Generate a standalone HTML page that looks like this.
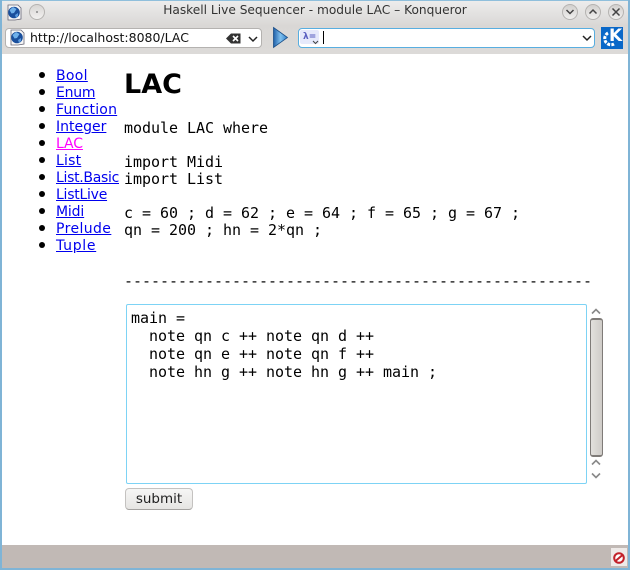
<!DOCTYPE html>
<html><head><meta charset="utf-8"><style>
html,body{margin:0;padding:0;background:#fff}
#w{position:relative;width:630px;height:570px;overflow:hidden;background:#fff;font-family:"DejaVu Sans","Liberation Sans",sans-serif}
.a{position:absolute;white-space:pre}
.m{font-family:"DejaVu Sans Mono","Liberation Mono",monospace;font-size:15px;line-height:17px;color:#000;letter-spacing:-.03px}
.l{left:56px;font-size:14px;line-height:17px;color:#00e;text-decoration:underline;letter-spacing:.1px}
.b{width:6px;height:6px;border-radius:50%;background:#000;left:39px}
svg{position:absolute;overflow:visible}
</style></head><body><div id="w">
<div class="a" style="left:0;top:0;width:630px;height:54px;background:linear-gradient(#ededed,#d9d7d5 26px,#dcdad8)"></div>
<div class="a" style="left:0;top:0;width:630px;height:1px;background:#8fbfdc"></div>
<div class="a" style="left:0;top:0;width:2px;height:570px;background:#7fb4d6"></div>
<div class="a" style="left:628px;top:0;width:2px;height:570px;background:#7fb4d6"></div>
<div class="a" style="left:0;top:568px;width:630px;height:2px;background:#7fb4d6"></div>
<div class="a" style="left:2px;top:54px;width:626px;height:491px;background:#fff"></div>
<div class="a" style="left:2px;top:545px;width:626px;height:23px;background:#c1b9b5"></div>

<div class="a" style="left:0;width:630px;top:1px;text-align:center;font-size:12.2px;line-height:18px;color:#333">Haskell Live Sequencer - module LAC – Konqueror</div>

<svg style="left:7px;top:4px" width="15" height="17" viewBox="0 0 15 17"><path d="M1 1H11L14 4V15L8 16H1Z" fill="#f6f6f6" stroke="#667" stroke-width=".8"/><circle cx="7" cy="8.500" r="5.800" fill="#1a4f9c"/><path d="M2.500 6 6 3 9.500 5 7 9 4.500 9.500Z" fill="#6fb0ea"/><path d="M8 11 11 9 11 12 9 14Z" fill="#5a9be0"/></svg>
<div class="a" style="left:29px;top:4px;width:14px;height:14px;border-radius:50%;background:linear-gradient(#d8d6d4,#f2f1f0);border:1px solid #b5b3b1"></div>
<div class="a" style="left:36px;top:11px;width:2px;height:2px;border-radius:50%;background:#888"></div>

<div class="a" style="left:5px;top:28px;width:255px;height:18px;background:#fff;border:1px solid #b4b2b0;border-radius:4px"></div>
<svg style="left:10px;top:29px" width="15" height="17" viewBox="0 0 15 17"><path d="M1 1H11L14 4V15L8 16H1Z" fill="#f6f6f6" stroke="#667" stroke-width=".8"/><circle cx="7" cy="8.500" r="5.800" fill="#1a4f9c"/><path d="M2.500 6 6 3 9.500 5 7 9 4.500 9.500Z" fill="#6fb0ea"/><path d="M8 11 11 9 11 12 9 14Z" fill="#5a9be0"/></svg>
<div class="a" style="left:30px;top:29px;font-size:12.500px;line-height:18px;color:#111">http://localhost:8080/LAC</div>
<svg style="left:226px;top:33px" width="15" height="11" viewBox="0 0 15 11"><path d="M0 5.500 5 .5H14.500V10.500H5Z" fill="#333"/><path d="M7 3 12 8M12 3 7 8" stroke="#fff" stroke-width="1.600"/></svg>
<svg style="left:248px;top:36px" width="10" height="6" viewBox="0 0 10 6"><path d="M1 1 5 5 9 1" fill="none" stroke="#222" stroke-width="1.500"/></svg>
<svg style="left:273px;top:27px" width="15" height="21" viewBox="0 0 15 21"><defs><linearGradient id="g" x1="0" x2="1" y1="0" y2="0"><stop offset="0" stop-color="#1f5fa8"/><stop offset=".5" stop-color="#7fc0ee"/><stop offset="1" stop-color="#2f7fca"/></linearGradient></defs><path d="M.5 .5 14.500 10.500 .5 20.500Z" fill="url(#g)" stroke="#1c4f88" stroke-width=".8"/></svg>

<div class="a" style="left:298px;top:28px;width:295px;height:18px;background:#fff;border:1px solid #58aee0;border-radius:4px"></div>
<div class="a" style="left:300px;top:30px;width:19px;height:14px;background:#e6e9fb;border-radius:2px"></div>
<div class="a" style="left:303px;top:31px;font-size:9px;line-height:12px;color:#5a5fc0;font-weight:bold">λ=</div>
<svg style="left:312px;top:40px" width="7" height="5" viewBox="0 0 7 5"><path d="M1 1 3.500 3.500 6 1" fill="none" stroke="#444" stroke-width="1"/></svg>
<div class="a" style="left:323px;top:31px;width:1px;height:13px;background:#000"></div>
<svg style="left:582px;top:35px" width="10" height="6" viewBox="0 0 10 6"><path d="M1 1 5 5 9 1" fill="none" stroke="#222" stroke-width="1.500"/></svg>

<div class="a" style="left:601px;top:27px;width:22px;height:22px;background:#0a68c8"></div>
<svg style="left:602px;top:30px" width="14" height="18" viewBox="0 0 14 18"><path d="M6 3A6 6 0 1 0 12 14" fill="none" stroke="#fff" stroke-width="3" stroke-dasharray="3 1.200"/></svg>
<div class="a" style="left:609px;top:26px;font-size:17px;line-height:20px;font-weight:bold;color:#fff">K</div>

<div class="a" style="left:562px;top:4px;width:14px;height:14px;border-radius:50%;background:linear-gradient(#d2d0ce,#f0efee);border:1px solid #b5b3b1"></div>
<div class="a" style="left:585px;top:4px;width:14px;height:14px;border-radius:50%;background:linear-gradient(#d2d0ce,#f0efee);border:1px solid #b5b3b1"></div>
<div class="a" style="left:608px;top:4px;width:14px;height:14px;border-radius:50%;background:linear-gradient(#d2d0ce,#f0efee);border:1px solid #b5b3b1"></div>
<svg style="left:565px;top:8px" width="10" height="8" viewBox="0 0 10 8"><path d="M1.500 2 5 5.500 8.500 2" fill="none" stroke="#444" stroke-width="1.500"/></svg>
<svg style="left:588px;top:8px" width="10" height="8" viewBox="0 0 10 8"><path d="M1.500 5.500 5 2 8.500 5.500" fill="none" stroke="#444" stroke-width="1.500"/></svg>
<svg style="left:611px;top:7px" width="10" height="10" viewBox="0 0 10 10"><path d="M1.500 1.500 8.500 8.500M8.500 1.500 1.500 8.500" fill="none" stroke="#444" stroke-width="1.500"/></svg>

<div class="a b" style="top:72px"></div><div class="a b" style="top:89px"></div><div class="a b" style="top:106px"></div><div class="a b" style="top:123px"></div><div class="a b" style="top:140px"></div><div class="a b" style="top:157px"></div><div class="a b" style="top:174px"></div><div class="a b" style="top:191px"></div><div class="a b" style="top:208px"></div><div class="a b" style="top:225px"></div><div class="a b" style="top:242px"></div>
<div class="a l" style="top:68px;letter-spacing:.3px">Bool</div>
<div class="a l" style="top:85px;letter-spacing:-.25px">Enum</div>
<div class="a l" style="top:102px;letter-spacing:.2px">Function</div>
<div class="a l" style="top:119px;letter-spacing:0">Integer</div>
<div class="a l" style="top:136px;color:#f0f;letter-spacing:-.1px">LAC</div>
<div class="a l" style="top:153px;letter-spacing:.2px">List</div>
<div class="a l" style="top:170px;letter-spacing:-.3px">List.Basic</div>
<div class="a l" style="top:187px;letter-spacing:-.25px">ListLive</div>
<div class="a l" style="top:204px;letter-spacing:-.15px">Midi</div>
<div class="a l" style="top:221px;letter-spacing:.4px">Prelude</div>
<div class="a l" style="top:238px;letter-spacing:.7px">Tuple</div>

<div class="a" style="left:124px;top:68px;font-size:27px;line-height:34px;font-weight:bold;color:#000">LAC</div>
<div class="a m" style="left:124px;top:120px">module LAC where

import Midi
import List

c = 60 ; d = 62 ; e = 64 ; f = 65 ; g = 67 ;
qn = 200 ; hn = 2*qn ;


----------------------------------------------------</div>

<div class="a" style="left:126px;top:304px;width:459px;height:178px;border:1px solid #7dd3f5;border-radius:2px;background:#fff"></div>
<div class="a m" style="left:131px;top:309px;line-height:18px">main =
  note qn c ++ note qn d ++
  note qn e ++ note qn f ++
  note hn g ++ note hn g ++ main ;</div>

<svg style="left:591px;top:308px" width="10" height="7" viewBox="0 0 10 7"><path d="M1 5.500 5 1.500 9 5.500" fill="none" stroke="#888" stroke-width="1.600"/></svg>
<div class="a" style="left:590px;top:318px;width:11px;height:135px;border:1px solid #7f7b78;border-width:2px 1.500px;border-radius:3px;background:linear-gradient(90deg,#e2e0dd,#cfccc8)"></div>
<svg style="left:591px;top:459px" width="10" height="7" viewBox="0 0 10 7"><path d="M1 5.500 5 1.500 9 5.500" fill="none" stroke="#888" stroke-width="1.600"/></svg>
<svg style="left:591px;top:472px" width="10" height="7" viewBox="0 0 10 7"><path d="M1 1.500 5 5.500 9 1.500" fill="none" stroke="#888" stroke-width="1.600"/></svg>

<div class="a" style="left:125px;top:488px;width:66px;height:20px;border:1px solid #c4c2c0;border-bottom-color:#a5a3a1;border-radius:4px;background:linear-gradient(#f6f6f5,#e6e5e3);text-align:center;font-size:13.500px;line-height:20px;color:#222">submit</div>

<div class="a" style="left:611px;top:548px;width:16px;height:18px;background:#eeeae8"></div>
<svg style="left:613px;top:552px" width="12" height="12" viewBox="0 0 12 12"><circle cx="6" cy="6" r="4.800" fill="#fff" stroke="#c2222a" stroke-width="2"/><path d="M2.500 9 9.500 3" stroke="#c2222a" stroke-width="2"/></svg>
</div></body></html>
